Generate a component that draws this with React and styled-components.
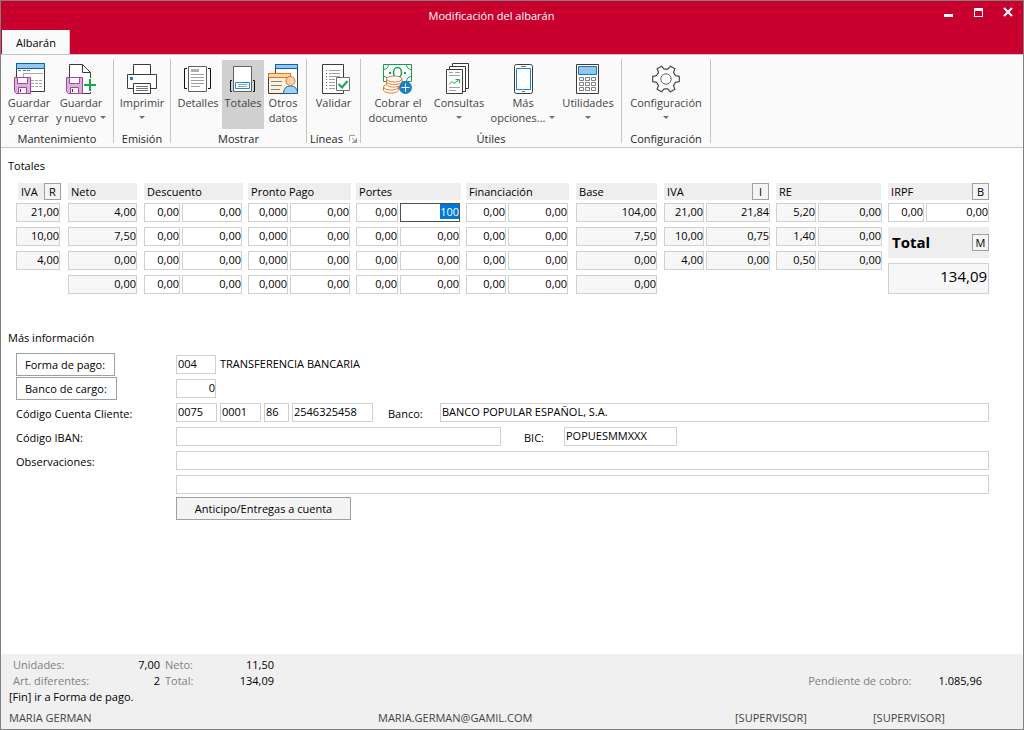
import React, { useEffect, useRef } from "react";
import styled, { createGlobalStyle } from "styled-components";

const INK = "#3c3c3c";

const Svg = ({ children }) => (
  <svg width="32" height="32" viewBox="0 0 32 32" fill="none" aria-hidden="true">
    {children}
  </svg>
);

const Floppy = () => (
  <g stroke="#a0489c">
    <path d="M1.5 15.5h16v16h-14l-2-2z" fill="#dcb0dc" />
    <path d="M4.5 15.5h10v6h-10z" fill="#fff" />
    <path d="M5.5 25.5h8v6h-8z" fill="#f4f4f4" />
    <path d="M7.5 27v3" stroke={INK} />
  </g>
);

const SaveCloseIcon = () => (
  <Svg>
    <path d="M3.5 1.5h28v28h-28z" fill="#fff" stroke={INK} />
    <path d="M3.5 1.5h28v5h-28z" fill="#90c8f0" stroke="#0c62a8" />
    <path d="M5 8.5h3M10 8.5h3M14 8.5h3" stroke="#707070" />
    <path d="M10 11.5h20M10.5 11v5M18 18.5h3M22 18.5h3M26 18.5h3M18 21.5h3M22 21.5h3M26 21.5h3M18 24.5h3M22 24.5h3M26 24.5h3" stroke="#a8a8a8" />
    <Floppy />
  </Svg>
);

const SaveNewIcon = () => (
  <Svg>
    <path d="M4.5 31.5v-29h13l8 8v21z" fill="#fff" stroke={INK} />
    <path d="M17.5 2.5v8h8" stroke={INK} />
    <path d="M25 16v14M18 23h14" stroke="#fafafa" strokeWidth="4" />
    <path d="M25 17v12M19 23h12" stroke="#14a850" strokeWidth="2" />
    <Floppy />
  </Svg>
);

const PrintIcon = () => (
  <Svg>
    <path d="M1.5 12.5h29v14h-29z" fill="#fff" stroke={INK} />
    <path d="M7.5 2.5h17v10h-17z" fill="#fff" stroke={INK} />
    <path d="M7.5 21.5h17v10h-17z" fill="#fff" stroke={INK} />
    <path d="M4 15h3v3H4z" fill="#1c84d0" />
    <path d="M10 24.5h12M10 26.5h12M10 28.5h12" stroke="#707070" />
  </Svg>
);

const DetailsIcon = () => (
  <Svg>
    <path d="M6.5 4.5h18v25h-18z" fill="#fff" stroke="#606060" />
    <path d="M5 6.5H2.5v20H5M26 6.5h2.5v20H26" stroke="#101010" />
    <path d="M9 7h8v3H9z" fill="#b0b0b0" />
    <path d="M9 12.5h13M9 15.5h13M9 18.5h13M9 21.5h13M9 24.5h9" stroke="#a0a0a0" />
  </Svg>
);

const TotalsIcon = () => (
  <Svg>
    <path d="M6.5 4.5h18v25h-18z" fill="#fff" stroke="#606060" />
    <path d="M5 18.5H3.5v11H5M26 18.5h1.5v11H26" stroke="#101010" />
    <path d="M8.5 20.5h14v6h-14z" fill="#fff" stroke="#1890d8" />
    <path d="M11 22.5h9M11 24.5h9" stroke="#a0a0a0" />
  </Svg>
);

const OtherDataIcon = () => (
  <Svg>
    <path d="M8.5 2.5h22v28h-22z" fill="#fff" stroke={INK} />
    <path d="M8.5 2.5h22v4h-22z" fill="#90c8f0" stroke="#0c62a8" />
    <path d="M1.5 11.5h22v20h-22z" fill="#fdf2dc" stroke={INK} />
    <path d="M1.5 11.5h22v4h-22z" fill="#fcd49c" stroke="#e07828" />
    <path d="M4 19.5h11M4 23.5h11M4 27.5h9" stroke="#808080" />
    <path d="M16.5 31.5c0-4 2-7.5 7-7.5s7 3.5 7 7.5z" fill="#a4d0f0" stroke="#1464a8" />
    <circle cx="23.5" cy="19" r="4.5" fill="#fad4b0" stroke="#c87838" />
  </Svg>
);

const ValidateIcon = () => (
  <Svg>
    <path d="M4.5 2.5h21v29h-21z" fill="#fff" stroke={INK} />
    <path d="M8 8.5h1M8 14.5h1M8 20.5h1M8 26.5h1" stroke="#14a040" />
    <path d="M8 11.5h1M8 17.5h1M8 23.5h1" stroke="#e02040" />
    <path d="M11 8.5h11M11 11.5h11M11 14.5h11M11 17.5h6M11 20.5h6M11 23.5h6M11 26.5h6" stroke="#a0a0a0" />
    <path d="M18.5 15.5h13v13h-13z" fill="#fff" stroke="#707070" />
    <path d="M20.5 22l3.5 3.5 5.5-6.5" stroke="#14a850" strokeWidth="2" />
  </Svg>
);

const ChargeIcon = () => (
  <Svg>
    <path d="M1.5 2.5h28v17h-28z" fill="#fff" stroke="#14a050" />
    <path d="M1.5 7.5c3 0 5-2 5-5M24.5 2.5c0 3 2 5 5 5M1.5 14.5c3 0 5 2 5 5M29.5 14.5c-3 0-5 2-5 5" stroke="#14a050" />
    <ellipse cx="15.5" cy="10.5" rx="4" ry="5" stroke="#14a050" strokeWidth="1.5" />
    <path d="M7 10h2v2H7zM22 10h2v2h-2z" fill="#14a050" />
    <g fill="#fff" stroke="#e87830">
      <path d="M1.5 25v3c0 1.8 3.5 3 7.5 3s7.5-1.2 7.5-3v-3" />
      <ellipse cx="9" cy="25" rx="7.5" ry="3" />
      <path d="M4.5 17v5c0 1.8 3.5 3 7.5 3s8-1.2 8-3v-5" />
      <path d="M4.5 19.5c0 1.8 3.5 3 7.5 3s8-1.2 8-3" />
      <ellipse cx="12.2" cy="17" rx="7.7" ry="3" />
    </g>
    <circle cx="23.5" cy="25.5" r="6.5" fill="#1c80c8" />
    <path d="M23.5 21.5v8M19.5 25.5h8" stroke="#fff" />
  </Svg>
);

const QueriesIcon = () => (
  <Svg>
    <g fill="#fff" stroke={INK}>
      <path d="M9.5 1.5h16v25h-16z" />
      <path d="M6.5 4.5h16v25h-16z" />
      <path d="M3.5 7.5h16v24h-16z" />
    </g>
    <path d="M6 10.5h4M12 10.5h5M6 13.5h11M6 25.5h11M6 28.5h7" stroke="#a0a0a0" />
    <path d="M6 22.5l3-3 2 2 5-4M12.5 17.5h4V21" stroke="#28a838" />
  </Svg>
);

const PhoneIcon = () => (
  <Svg>
    <rect x="7.5" y="2.5" width="18" height="29" rx="2" fill="#fff" stroke={INK} />
    <path d="M9.5 6.5h14v21h-14z" fill="#fff" stroke="#1c84d0" />
    <path d="M14 4.5h5M15 29.5h3" stroke="#707070" />
  </Svg>
);

const CalculatorIcon = () => (
  <Svg>
    <path d="M4.5 2.5h22v29h-22z" fill="#fff" stroke={INK} />
    <path d="M6.5 4.5h18v8h-18z" fill="#90c8f0" stroke="#1474b8" />
    <path d="M7.5 15.5h4v3h-4zM13.5 15.5h4v3h-4zM19.5 15.5h4v3h-4zM7.5 20.5h4v3h-4zM13.5 20.5h4v3h-4zM19.5 20.5h4v3h-4zM7.5 25.5h4v3h-4zM13.5 25.5h4v3h-4zM19.5 25.5h4v3h-4z" stroke="#808080" />
  </Svg>
);

// six teeth, four corners each: base, tip, tip, base
const gearPoints = [0, 60, 120, 180, 240, 300]
  .flatMap((tooth) => [
    [tooth - 19, 10],
    [tooth - 11, 13.5],
    [tooth + 11, 13.5],
    [tooth + 19, 10],
  ])
  .map(([angle, r]) => {
    const rad = (angle * Math.PI) / 180;
    return `${(16 + r * Math.cos(rad)).toFixed(1)},${(17 + r * Math.sin(rad)).toFixed(1)}`;
  })
  .join(" ");

const GearIcon = () => (
  <Svg>
    <polygon points={gearPoints} fill="#fff" stroke="#484848" strokeWidth="1.2" strokeLinejoin="round" />
    <circle cx="16" cy="17" r="5.2" stroke="#606060" />
  </Svg>
);

const ribbon = [
  {
    title: "Mantenimiento",
    left: 2,
    right: 6,
    items: [
      { icon: SaveCloseIcon, lines: ["Guardar", "y cerrar"], width: 52 },
      { icon: SaveNewIcon, lines: ["Guardar", "y nuevo"], width: 52, arrow: true },
    ],
  },
  {
    title: "Emisión",
    items: [{ icon: PrintIcon, lines: ["Imprimir", ""], width: 56, arrow: true }],
  },
  {
    title: "Mostrar",
    left: 3,
    right: 4,
    items: [
      { icon: DetailsIcon, lines: ["Detalles"], width: 48 },
      { icon: TotalsIcon, lines: ["Totales"], width: 42, active: true },
      { icon: OtherDataIcon, lines: ["Otros", "datos"], width: 38 },
    ],
  },
  {
    title: "Líneas",
    launcher: true,
    items: [{ icon: ValidateIcon, lines: ["Validar"], width: 53 }],
  },
  {
    title: "Útiles",
    left: 5,
    right: 3,
    items: [
      { icon: ChargeIcon, lines: ["Cobrar el", "documento"], width: 64 },
      { icon: QueriesIcon, lines: ["Consultas", ""], width: 58, arrow: true },
      { icon: PhoneIcon, lines: ["Más", "opciones..."], width: 70, arrow: true },
      { icon: CalculatorIcon, lines: ["Utilidades", ""], width: 60, arrow: true },
    ],
  },
  {
    title: "Configuración",
    items: [{ icon: GearIcon, lines: ["Configuración", ""], width: 88, arrow: true }],
  },
];

// column widths include the gap that follows the field
const columns = [
  { width: 52, gap: 8, locked: true },
  { width: 76, gap: 7, locked: true },
  { width: 38, gap: 2 },
  { width: 66, gap: 6 },
  { width: 42, gap: 2 },
  { width: 66, gap: 6 },
  { width: 44, gap: 2 },
  { width: 66, gap: 6 },
  { width: 42, gap: 2 },
  { width: 68, gap: 8 },
  { width: 88, gap: 7, locked: true },
  { width: 42, gap: 2, locked: true },
  { width: 70, gap: 6, locked: true },
  { width: 42, gap: 2, locked: true },
  { width: 70, gap: 6, locked: true },
  { width: 38, gap: 2 },
  { width: 63, gap: 0 },
];

const headings = [
  { title: "IVA", span: 1, gap: 7, inset: 2, letter: "R" },
  { title: "Neto", span: 1, gap: 7 },
  { title: "Descuento", span: 2, gap: 5 },
  { title: "Pronto Pago", span: 2, gap: 5 },
  { title: "Portes", span: 2, gap: 5 },
  { title: "Financiación", span: 2, gap: 7 },
  { title: "Base", span: 1, gap: 7 },
  { title: "IVA", span: 2, gap: 7, letter: "I" },
  { title: "RE", span: 2, gap: 7 },
  { title: "IRPF", span: 2, gap: 0, letter: "B" },
];

const rows = [
  ["21,00", "4,00", "0,00", "0,00", "0,000", "0,00", "0,00", "100", "0,00", "0,00", "104,00", "21,00", "21,84", "5,20", "0,00", "0,00", "0,00"],
  ["10,00", "7,50", "0,00", "0,00", "0,000", "0,00", "0,00", "0,00", "0,00", "0,00", "7,50", "10,00", "0,75", "1,40", "0,00"],
  ["4,00", "0,00", "0,00", "0,00", "0,000", "0,00", "0,00", "0,00", "0,00", "0,00", "0,00", "4,00", "0,00", "0,50", "0,00"],
  [null, "0,00", "0,00", "0,00", "0,000", "0,00", "0,00", "0,00", "0,00", "0,00", "0,00", null, null, null, null],
];

const RibbonItem = ({ item }) => {
  const Icon = item.icon;
  return (
    <RibbonButton type="button" $width={item.width} $active={item.active}>
      <Icon />
      {item.lines.map((line, i) => (
        <RibbonLine key={i}>
          {line}
          {item.arrow && i === 1 && <Arrow $spaced={line !== ""} />}
        </RibbonLine>
      ))}
    </RibbonButton>
  );
};

const TotalsTable = () => {
  const current = useRef(null);

  useEffect(() => {
    current.current.focus();
    current.current.select();
  }, []);

  return (
    <Table>
      <colgroup>
        {columns.map((col, i) => (
          <Column key={i} $width={col.width} />
        ))}
      </colgroup>
      <thead>
        <tr>
          {headings.map((head, i) => (
            <HeadCell key={i} colSpan={head.span} $gap={head.gap} $inset={head.inset}>
              <HeadLabel>
                {head.title}
                {head.letter && <LetterButton type="button">{head.letter}</LetterButton>}
              </HeadLabel>
            </HeadCell>
          ))}
        </tr>
      </thead>
      <tbody>
        {rows.map((row, r) => (
          <tr key={r}>
            {row.map((value, c) => (
              <Cell key={c} $gap={columns[c].gap}>
                {value !== null && (
                  <Field
                    ref={r === 0 && c === 7 ? current : null}
                    aria-label={`Fila ${r + 1}, columna ${c + 1}`}
                    defaultValue={value}
                    readOnly={columns[c].locked}
                    $locked={columns[c].locked}
                    $right
                  />
                )}
              </Cell>
            ))}
            {r === 1 && (
              <Cell colSpan={2} rowSpan={3} $gap={0}>
                <TotalLabel>
                  <label htmlFor="total">Total</label>
                  <LetterButton type="button">M</LetterButton>
                </TotalLabel>
                <TotalField id="total" defaultValue="134,09" readOnly $right />
              </Cell>
            )}
          </tr>
        ))}
      </tbody>
    </Table>
  );
};

const App = () => (
  <>
    <GlobalStyle />
    <Window>
      <TitleBar>
        <Title>Modificación del albarán</Title>
        <WindowButton type="button" aria-label="Minimizar">
          <svg width="10" height="10" viewBox="0 0 10 10">
            <path d="M1 7h9v3H1z" fill="#fff" />
          </svg>
        </WindowButton>
        <WindowButton type="button" aria-label="Maximizar">
          <svg width="10" height="10" viewBox="0 0 10 10">
            <path d="M1 1h9v9H1zM2 4v5h7V4z" fill="#fff" fillRule="evenodd" />
          </svg>
        </WindowButton>
        <WindowButton type="button" aria-label="Cerrar">
          <svg width="10" height="10" viewBox="0 0 10 10">
            <path d="M1 1l8 8M9 1l-8 8" stroke="#fff" strokeWidth="2" />
          </svg>
        </WindowButton>
      </TitleBar>
      <TabBar>
        <Tab type="button">Albarán</Tab>
      </TabBar>
      <Ribbon>
        {ribbon.map((group) => (
          <RibbonGroup key={group.title}>
            <RibbonItems $left={group.left} $right={group.right}>
              {group.items.map((item, i) => (
                <RibbonItem key={i} item={item} />
              ))}
            </RibbonItems>
            <RibbonTitle>
              {group.title}
              {group.launcher && (
                <Launcher type="button" aria-label="Opciones de líneas">
                  <svg width="8" height="8" viewBox="0 0 8 8" fill="none" stroke="#a0a0a0">
                    <path d="M.5 6V.5H6M3 3l3 3M7.5 3v4.5H3" />
                    <path d="M4 7l3-3v3z" fill="#a0a0a0" stroke="none" />
                  </svg>
                </Launcher>
              )}
            </RibbonTitle>
          </RibbonGroup>
        ))}
      </Ribbon>

      <Main>
        <SectionTitle>Totales</SectionTitle>
        <TotalsTable />

        <SectionTitle>Más información</SectionTitle>
        <Form>
          <FormRow>
            <LabelColumn>
              <PlainButton type="button">Forma de pago:</PlainButton>
            </LabelColumn>
            <Field aria-label="Forma de pago" defaultValue="004" $width={40} />
            <FieldText>TRANSFERENCIA BANCARIA</FieldText>
          </FormRow>
          <FormRow>
            <LabelColumn>
              <PlainButton type="button">Banco de cargo:</PlainButton>
            </LabelColumn>
            <Field aria-label="Banco de cargo" defaultValue="0" $width={40} $right />
          </FormRow>
          <FormRow>
            <LabelColumn>
              <Label htmlFor="ccc">Código Cuenta Cliente:</Label>
            </LabelColumn>
            <FieldGroup>
              <Field id="ccc" defaultValue="0075" $width={41} />
              <Field aria-label="Oficina" defaultValue="0001" $width={41} />
              <Field aria-label="Dígito de control" defaultValue="86" $width={25} />
              <Field aria-label="Número de cuenta" defaultValue="2546325458" $width={81} />
            </FieldGroup>
            <InlineLabel htmlFor="banco" $width={52}>
              Banco:
            </InlineLabel>
            <Field id="banco" defaultValue="BANCO POPULAR ESPAÑOL, S.A." />
          </FormRow>
          <FormRow>
            <LabelColumn>
              <Label htmlFor="iban">Código IBAN:</Label>
            </LabelColumn>
            <Field id="iban" $width={325} />
            <InlineLabel htmlFor="bic" $width={40} $far>
              BIC:
            </InlineLabel>
            <Field id="bic" defaultValue="POPUESMMXXX" $width={113} />
          </FormRow>
          <FormRow>
            <LabelColumn>
              <Label htmlFor="obs">Observaciones:</Label>
            </LabelColumn>
            <Field id="obs" />
          </FormRow>
          <FormRow>
            <LabelColumn />
            <Field aria-label="Observaciones, segunda línea" />
          </FormRow>
          <FormRow>
            <LabelColumn />
            <AdvanceButton type="button">Anticipo/Entregas a cuenta</AdvanceButton>
          </FormRow>
        </Form>
      </Main>

      <Footer>
        <Summary>
          <Counters>
            <Muted>Unidades:</Muted>
            <Amount>7,00</Amount>
            <Muted>Neto:</Muted>
            <Amount>11,50</Amount>
            <Muted>Art. diferentes:</Muted>
            <Amount>2</Amount>
            <Muted>Total:</Muted>
            <Amount>134,09</Amount>
          </Counters>
          <Pending>
            <Muted>Pendiente de cobro:</Muted>
            <Amount>1.085,96</Amount>
          </Pending>
        </Summary>
        <Hint>[Fin] ir a Forma de pago.</Hint>
        <StatusBar>
          <span>MARIA GERMAN</span>
          <span>MARIA.GERMAN@GAMIL.COM</span>
          <span>[SUPERVISOR]</span>
          <span>[SUPERVISOR]</span>
        </StatusBar>
      </Footer>
    </Window>
  </>
);

export default App;

const GlobalStyle = createGlobalStyle`
  * {
    box-sizing: border-box;
  }

  body {
    margin: 0;
  }

  body, button, input {
    font-family: "Open Sans", "Noto Sans", sans-serif;
    font-size: 11px;
    line-height: 15px;
    color: #000;
  }

  ::selection {
    background: #0078d7;
    color: #fff;
  }
`;

const Window = styled.div`
  display: flex;
  flex-direction: column;
  min-height: 100vh;
  border: 1px solid #7f7f7f;
  background: #fff;
`;

const TitleBar = styled.header`
  display: flex;
  height: 29px;
  background: #c8002d;
`;

const Title = styled.h1`
  flex: 1;
  margin: 0;
  padding: 7px 0 0 49px;
  font-size: 11px;
  font-weight: 400;
  line-height: 15px;
  text-align: center;
  color: #fff;
`;

const WindowButton = styled.button`
  display: flex;
  align-items: flex-start;
  justify-content: center;
  width: 30px;
  padding: 6px 0 0;
  border: none;
  background: none;
`;

const TabBar = styled.nav`
  display: flex;
  height: 24px;
  padding-left: 1px;
  background: #c8002d;
`;

const Tab = styled.button`
  height: 25px;
  padding: 0 13px 0 14px;
  border: none;
  border-right: 1px solid #c6c6c6;
  background: #fafafa;
`;

const Ribbon = styled.div`
  display: flex;
  height: 94px;
  padding: 4px 0;
  border-top: 1px solid #c6c6c6;
  border-bottom: 1px solid #c6c6c6;
  background: #fafafa;
`;

const RibbonGroup = styled.section`
  display: flex;
  flex-direction: column;
  justify-content: space-between;
  border-right: 1px solid #c6c6c6;
`;

const RibbonItems = styled.div`
  display: flex;
  padding: 1px ${(props) => props.$right || 0}px 0 ${(props) => props.$left || 0}px;
`;

const RibbonButton = styled.button`
  display: flex;
  flex-direction: column;
  align-items: center;
  width: ${(props) => props.$width}px;
  height: 69px;
  padding: 2px 0 0;
  border: none;
  background: ${(props) => (props.$active ? "#d0d0d0" : "none")};
  white-space: nowrap;

  svg {
    margin-bottom: 1px;
    flex-shrink: 0;
  }
`;

const RibbonLine = styled.span`
  display: flex;
  align-items: center;
  justify-content: center;
  height: 15px;
  color: #444;
`;

const Arrow = styled.i`
  margin-left: ${(props) => (props.$spaced ? 4 : 0)}px;
  border: 3px solid transparent;
  border-top-color: #707070;
  border-bottom: none;
`;

const RibbonTitle = styled.h2`
  display: flex;
  align-items: center;
  justify-content: center;
  gap: 6px;
  margin: 0;
  font-size: 11px;
  font-weight: 400;
  line-height: 8px;
  color: #262626;
`;

const Launcher = styled.button`
  display: flex;
  padding: 0;
  border: none;
  background: none;
`;

const Main = styled.main`
  flex: 1;
  padding: 10px 34px 0 7px;
`;

const SectionTitle = styled.h2`
  margin: 0 0 8px;
  font-size: 11px;
  font-weight: 400;
  line-height: 15px;
`;

const Table = styled.table`
  width: calc(100% - 8px);
  margin: 10px 0 31px 8px;
  border-collapse: collapse;
  table-layout: fixed;
`;

const Column = styled.col`
  width: ${(props) => props.$width}px;
`;

const HeadCell = styled.th`
  height: 20px;
  padding: 0 ${(props) => props.$gap}px 0 ${(props) => props.$inset || 0}px;
  font-weight: 400;
  text-align: left;
  vertical-align: top;
`;

const HeadLabel = styled.div`
  display: flex;
  align-items: center;
  justify-content: space-between;
  height: 17px;
  padding-left: 3px;
  background: #eee;
`;

const LetterButton = styled.button`
  width: 17px;
  height: 17px;
  padding: 0;
  border: 1px solid #a0a0a0;
  background: #f4f4f4;
  line-height: 13px;
`;

const Cell = styled.td`
  height: 24px;
  padding: 0 ${(props) => props.$gap}px 0 0;
  vertical-align: top;
`;

const Field = styled.input`
  display: block;
  width: ${(props) => (props.$width ? `${props.$width}px` : "100%")};
  min-width: 0;
  height: 19px;
  padding: ${(props) => (props.$right ? "0 0 2px" : "0 1px 2px")};
  border: 1px solid #d0d0d0;
  outline: none;
  background: ${(props) => (props.$locked ? "#f7f7f7" : "#fff")};
  text-align: ${(props) => (props.$right ? "right" : "left")};

  &:focus {
    border-color: #505050;
  }
`;

const TotalLabel = styled.div`
  display: flex;
  align-items: center;
  justify-content: space-between;
  height: 31px;
  margin-bottom: 5px;
  padding-left: 4px;
  background: #eee;
  font-size: 15px;
  font-weight: 700;
`;

const TotalField = styled(Field)`
  height: 31px;
  padding: 0 1px 5px;
  background: #f7f7f7;
  font-size: 15px;
`;

const Form = styled.div`
  padding-left: 8px;
`;

const FormRow = styled.div`
  display: flex;
  align-items: center;
  height: 24px;
  padding-bottom: 1px;
`;

const LabelColumn = styled.div`
  flex: none;
  width: 160px;
`;

const Label = styled.label`
  display: block;
  padding-top: 2px;
`;

const InlineLabel = styled(Label)`
  flex: none;
  width: ${(props) => props.$width}px;
  margin-left: ${(props) => (props.$far ? 23 : 15)}px;
`;

const FieldGroup = styled.div`
  display: flex;
  flex: none;
  gap: 3px;
`;

const FieldText = styled.span`
  padding: 0 0 2px 4px;
`;

const PlainButton = styled.button`
  display: block;
  height: 23px;
  padding: 0 9px 0 8px;
  border: 1px solid #a0a0a0;
  background: #fff;
`;

const AdvanceButton = styled.button`
  width: 175px;
  height: 23px;
  border: 1px solid #a0a0a0;
  background: #f4f4f4;
`;

const Footer = styled.footer`
  padding: 3px 8px 4px;
  background: #f0f0f0;
`;

const Summary = styled.div`
  display: flex;
  align-items: flex-end;
  justify-content: space-between;
  padding: 0 33px 0 4px;
`;

const Counters = styled.div`
  display: grid;
  grid-template-columns: 97px 50px 50px 64px;
  grid-auto-rows: 16px;
`;

const Pending = styled.div`
  display: flex;
  gap: 27px;
  height: 16px;
`;

const Muted = styled.span`
  color: #808080;

  ${Counters} &:nth-child(4n + 3) {
    padding-left: 5px;
  }
`;

const Amount = styled.span`
  text-align: right;
`;

const Hint = styled.p`
  margin: 0 0 5px;
  line-height: 16px;
`;

const StatusBar = styled.div`
  display: grid;
  grid-template-columns: 369fr 357fr 138fr 142fr;
  line-height: 15px;
  color: #444;
`;
